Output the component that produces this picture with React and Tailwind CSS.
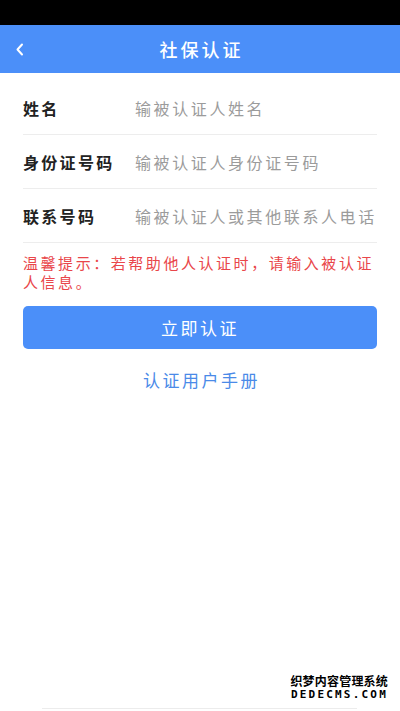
import React, { useState } from 'react';

const cjk = { fontFamily: '"Noto Sans CJK SC", "Noto Sans", sans-serif' };

const fields = [
  { name: 'name', label: '姓名', placeholder: '输被认证人姓名' },
  { name: 'idcard', label: '身份证号码', placeholder: '输被认证人身份证号码' },
  { name: 'phone', label: '联系号码', placeholder: '输被认证人或其他联系人电话' },
];

const App = () => {
  const [form, setForm] = useState({ name: '', idcard: '', phone: '' });

  const handleChange = (e) => {
    const { name, value } = e.target;
    setForm({ ...form, [name]: value });
  };

  return (
    <div className="relative w-[400px] h-[711px] bg-white overflow-hidden" style={cjk}>
      {/* Status bar */}
      <div className="h-[25px] bg-black"></div>

      {/* Header */}
      <div className="relative h-[48px] bg-[#4b8ff9] flex items-center justify-center">
        <button className="absolute left-[12px] top-[13px] w-[14px] h-[22px] flex items-center justify-center">
          <svg width="9" height="13" viewBox="0 0 9 13" fill="none">
            <path d="M7 1.5 L2.5 6.5 L7 11.5" stroke="white" strokeWidth="2" strokeLinecap="round" strokeLinejoin="round" />
          </svg>
        </button>
        <h1 className="text-white text-[18px] tracking-[3px] font-medium leading-none pl-[3px]">社保认证</h1>
      </div>

      {/* Form */}
      <div className="px-[23px] pt-[8px]">
        {fields.map((f) => (
          <div key={f.name} className="h-[54px] flex items-center border-b border-[#ededed]">
            <label className="w-[112px] shrink-0 text-[16px] tracking-[2.3px] font-semibold text-[#222]">
              {f.label}
            </label>
            <input
              name={f.name}
              value={form[f.name]}
              onChange={handleChange}
              placeholder={f.placeholder}
              className="flex-1 min-w-0 text-[16px] tracking-[2.6px] text-[#333] placeholder:text-[#9b9b9b] outline-none bg-transparent"
            />
          </div>
        ))}

        {/* Tip */}
        <p className="mt-[10px] text-[15px] leading-[19px] tracking-[2.55px] text-[#e9464a]">
          温馨提示：若帮助他人认证时，请输入被认证人信息。
        </p>

        {/* Submit */}
        <button className="mt-[15px] w-full h-[43px] rounded-[5px] bg-[#4b8ff9] text-white text-[17px] tracking-[2.5px] flex items-center justify-center">
          立即认证
        </button>

        <div className="mt-[19px] text-center">
          <a className="text-[17px] leading-[24px] tracking-[2.5px] text-[#4a8ae8] pl-[3px]">认证用户手册</a>
        </div>
      </div>

      {/* Watermark */}
      <div className="absolute right-[12px] top-[675px] flex flex-col items-end leading-none">
        <span
          className="text-[12px] font-bold text-black tracking-[0.2px]"
          style={{ textShadow: '1px 0 #fff, -1px 0 #fff, 0 1px #fff, 0 -1px #fff' }}
        >
          织梦内容管理系统
        </span>
        <span
          className="mt-[2px] text-[11px] font-bold text-black tracking-[2.2px]"
          style={{ fontFamily: '"DejaVu Sans Mono", monospace', textShadow: '1px 0 #fff, -1px 0 #fff, 0 1px #fff, 0 -1px #fff' }}
        >
          DEDECMS.COM
        </span>
      </div>

      {/* Bottom line */}
      <div className="absolute left-[42px] right-[43px] top-[708px] h-[1px] bg-[#ececec]"></div>
    </div>
  );
};

export default App;
